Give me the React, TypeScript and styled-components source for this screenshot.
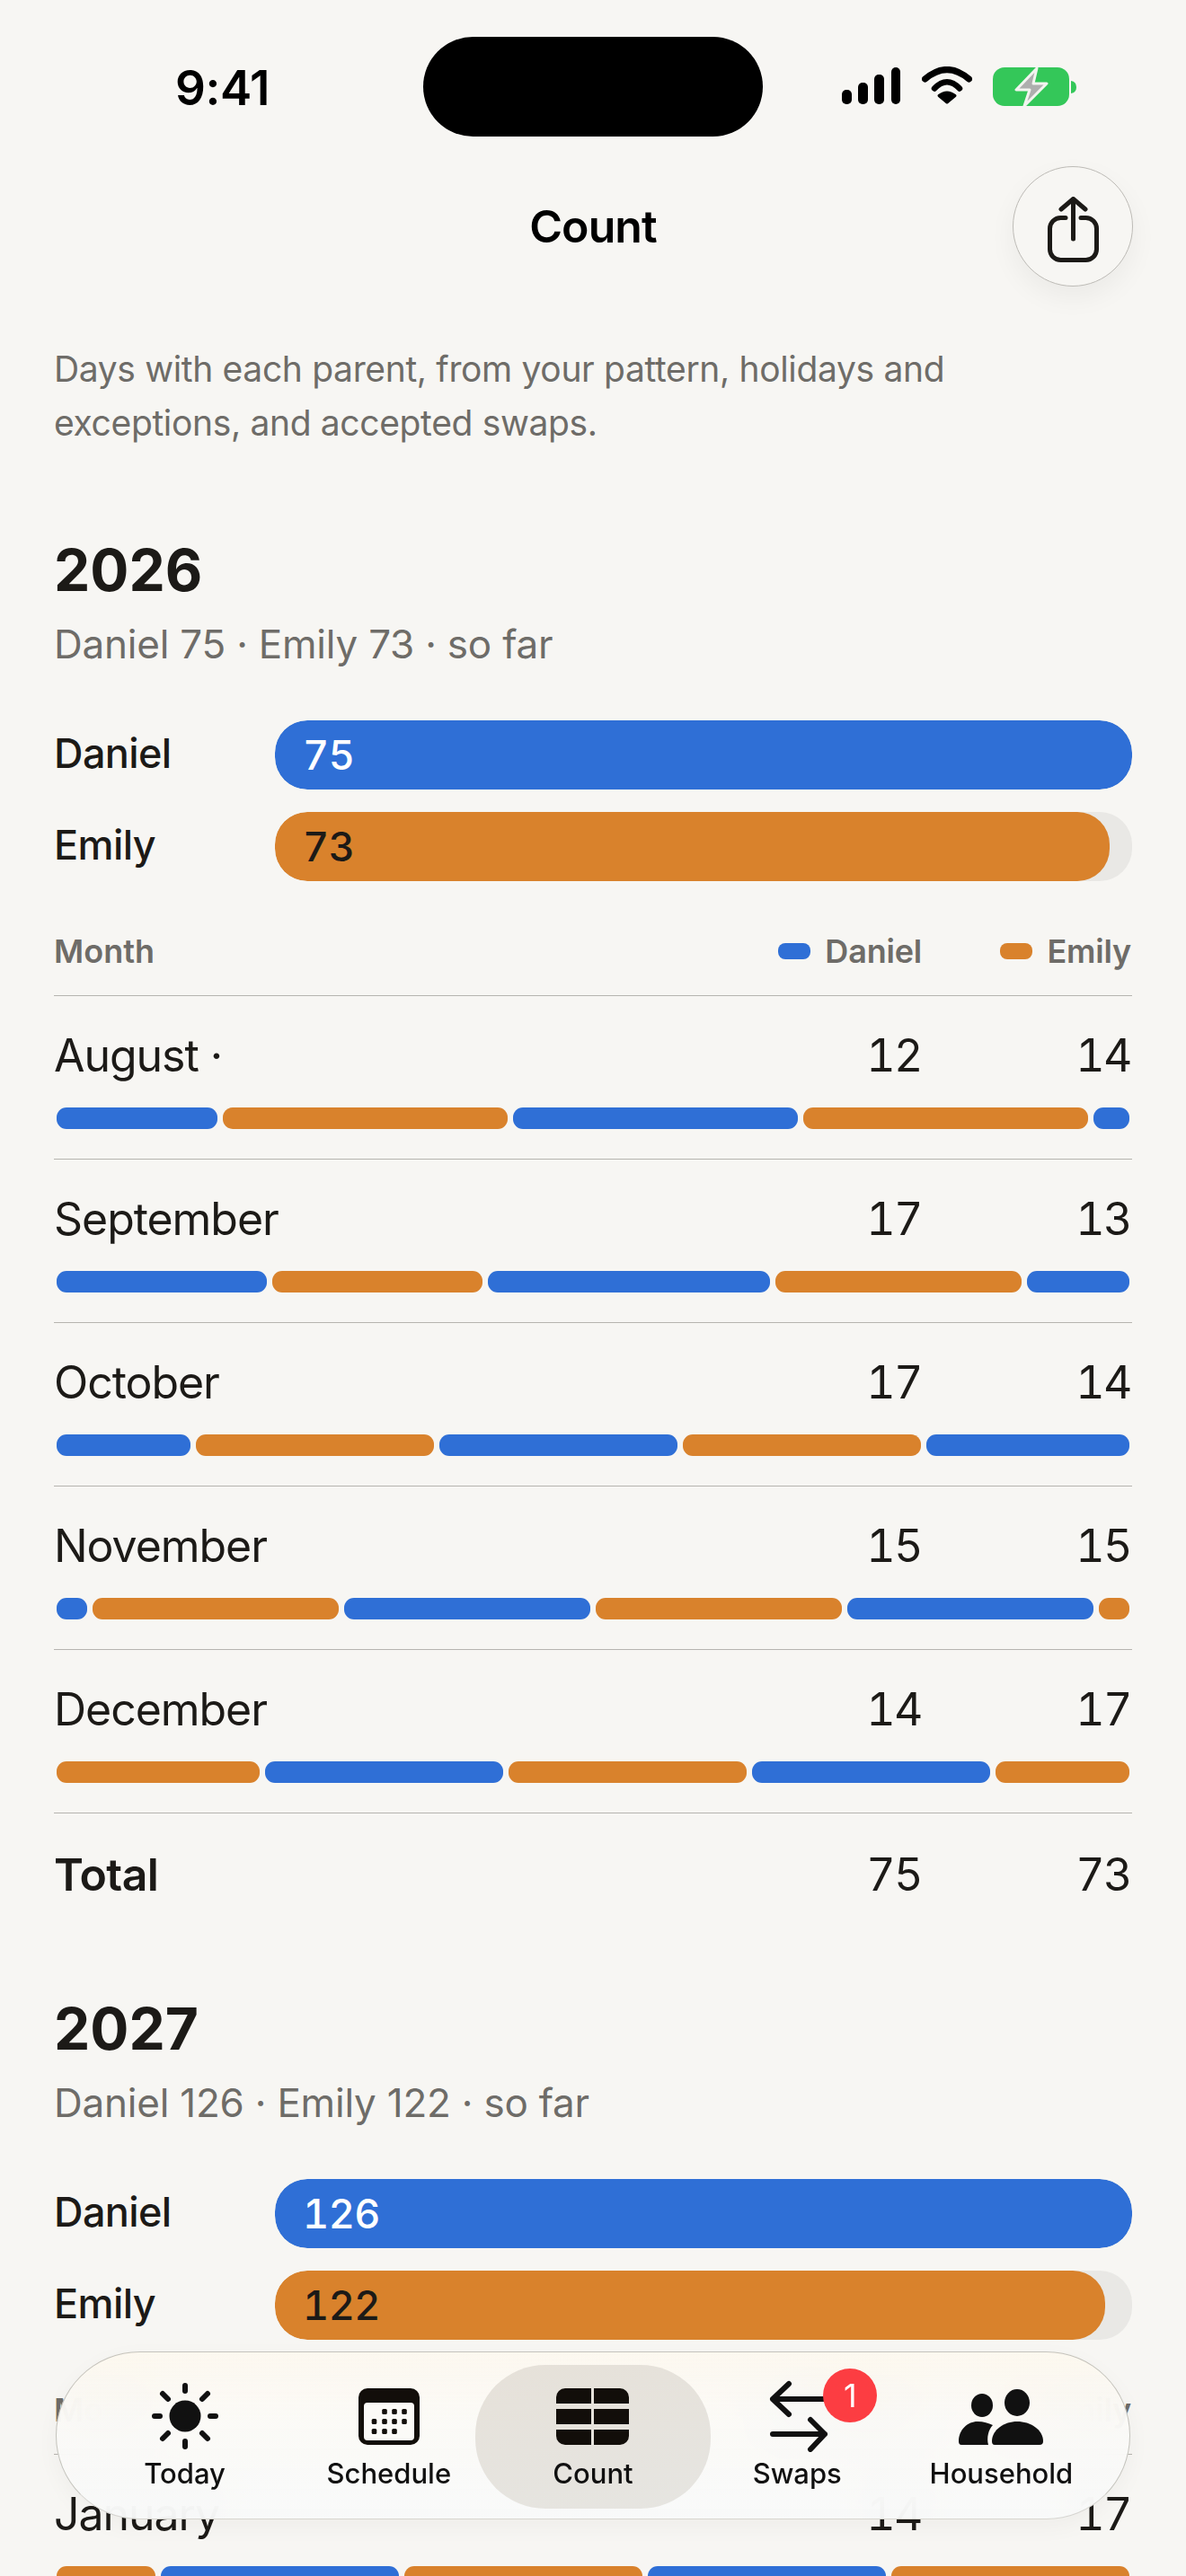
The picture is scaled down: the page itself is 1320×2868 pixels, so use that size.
import React from "react";
import styled, { createGlobalStyle } from "styled-components";

const BLUE = "#2f6fd6";
const ORANGE = "#d9822c";
const INK = "#1c1a17";
const MUTED = "#6e6c68";

const Global = createGlobalStyle`
  html, body { margin: 0; padding: 0; background: #f7f6f3; }
  * { box-sizing: border-box; }
  body { font-family: Inter, "Liberation Sans", sans-serif; color: ${INK}; }
`;

const Screen = styled.div`
  position: relative;
  width: 1320px;
  height: 2868px;
  overflow: hidden;
  background: #f7f6f3;
`;

const StatusBar = styled.div`
  display: grid;
  grid-template-columns: 471px 378px 1fr;
  align-items: center;
  height: 111px;
  margin-top: 41px;
`;
const Clock = styled.div`
  text-align: center;
  padding-left: 24px;
  font-size: 53px;
  font-weight: 600;
  letter-spacing: -0.5px;
  color: #000;
  line-height: 60px;
  margin-top: 2px;
`;
const Island = styled.div`
  height: 111px;
  background: #000;
  border-radius: 56px;
`;
const StatusIcons = styled.div`
  display: flex;
  align-items: flex-start;
  padding-left: 88px;
  margin-top: 0;
  svg { display: block; flex: none; }
`;
const WifiIcon = styled.svg`margin-left: 24px; margin-top: -1px;`;
const BatteryIcon = styled.svg`margin-left: 23px;`;

const TitleBar = styled.header`
  display: grid;
  grid-template-columns: 134px 1fr 134px;
  align-items: center;
  margin: 33px 59px 0 59px;
  height: 134px;
`;
const Title = styled.h1`
  grid-column: 2;
  margin: 0;
  text-align: center;
  font-size: 50px;
  font-weight: 600;
  letter-spacing: -0.9px;
  color: #000;
  line-height: 60px;
`;
const ShareButton = styled.button`
  grid-column: 3;
  width: 134px;
  height: 134px;
  border-radius: 50%;
  padding: 9px 0 0;
  display: flex;
  align-items: center;
  justify-content: center;
  background: #f7f6f3;
  border: 1px solid #bdbbb6;
  box-shadow: 0 12px 30px rgba(0, 0, 0, 0.05);
`;

const Intro = styled.p`
  margin: 62px 60px 94px 60px;
  font-size: 39px;
  line-height: 60px;
  color: ${MUTED};
  letter-spacing: -0.35px;
`;

const Section = styled.section`
  & + & { margin-top: 102px; }
`;
const Year = styled.h2`
  margin: 0 0 14px 60px;
  font-size: 64px;
  line-height: 80px;
  font-weight: 700;
  color: ${INK};
`;
const Summary = styled.div`
  margin: 0 0 57px 60px;
  font-size: 44px;
  line-height: 56px;
  color: ${MUTED};
  letter-spacing: -0.22px;
`;

const Totals = styled.div`
  display: flex;
  flex-direction: column;
  gap: 25px;
  margin: 0 60px 56px;
`;
const TotalRow = styled.div`
  display: grid;
  grid-template-columns: 246px 1fr;
  align-items: center;
`;
const ParentName = styled.div`
  font-size: 45px;
  font-weight: 500;
  letter-spacing: -0.6px;
  line-height: 56px;
  padding-bottom: 3px;
`;
const Track = styled.div`
  height: 77px;
  border-radius: 36px;
  background: #e9e8e5;
  overflow: hidden;
`;
const Fill = styled.div<{ $who: "d" | "e" }>`
  height: 100%;
  border-radius: 36px;
  padding-left: 31px;
  display: flex;
  align-items: center;
  font-size: 45px;
  font-weight: 500;
  letter-spacing: -0.5px;
  font-variant-numeric: tabular-nums;
  background: ${(p) => (p.$who === "d" ? BLUE : ORANGE)};
  color: ${(p) => (p.$who === "d" ? "#fff" : INK)};
`;

const Table = styled.div`
  margin: 0 60px;
`;
const columns = `grid-template-columns: 1fr 140px 233px;`;
const HeaderRow = styled.div`
  display: grid;
  ${columns}
  padding: 0 1px 27px 0;
  border-bottom: 1px solid #b6b4af;
  font-size: 36px;
  line-height: 44px;
  font-weight: 600;
  color: ${MUTED};
`;
const LegendCell = styled.div`
  display: flex;
  align-items: center;
  justify-content: flex-end;
  white-space: nowrap;
`;
const LegendDot = styled.span<{ $who: "d" | "e" }>`
  flex: none;
  width: 36px;
  height: 18px;
  border-radius: 8px;
  margin-right: 16px;
  background: ${(p) => (p.$who === "d" ? BLUE : ORANGE)};
`;
const LegendText = styled.span`
  letter-spacing: -0.2px;
`;

const MonthRow = styled.div`
  padding-top: 36px;
  padding-bottom: 33px;
  border-bottom: 1px solid #b6b4af;
`;
const MonthText = styled.div`
  display: grid;
  ${columns}
  padding: 0 1px 0 0;
  font-size: 50px;
  line-height: 60px;
  letter-spacing: -1.05px;
`;
const Num = styled.div`
  text-align: right;
  letter-spacing: -1.5px;
  font-size: 50px;
  font-variant-numeric: tabular-nums;
`;
const Segments = styled.div`
  display: flex;
  gap: 6px;
  height: 24px;
  margin: 28px 3px 0;
`;
const Segment = styled.div<{ $who: "d" | "e" }>`
  height: 24px;
  border-radius: 11px;
  background: ${(p) => (p.$who === "d" ? BLUE : ORANGE)};
`;
const TotalLine = styled(MonthText)`
  padding-top: 38px;
`;
const TotalLabel = styled.div`
  font-weight: 600;
  letter-spacing: -0.6px;
`;

const TabBar = styled.nav`
  position: absolute;
  left: 62px;
  top: 2618px;
  width: 1196px;
  height: 187px;
  padding: 31px 29px 0;
  display: flex;
  border-radius: 94px;
  border: 1px solid rgba(178, 176, 168, 0.75);
  border-bottom-color: rgba(200, 198, 192, 0.7);
  background: linear-gradient(180deg, rgba(253, 248, 238, 0.86) 0%, rgba(251, 250, 247, 0.92) 40%, rgba(248, 249, 249, 0.94) 100%);
  backdrop-filter: blur(28px);
  box-shadow: 0 8px 26px rgba(0, 0, 0, 0.04);
`;
const Tab = styled.div<{ $active?: boolean }>`
  position: relative;
  flex: 1 1 0;
  display: flex;
  flex-direction: column;
  align-items: center;
  &::before {
    content: "";
    display: ${(p) => (p.$active ? "block" : "none")};
    position: absolute;
    left: -17px;
    right: -17px;
    top: -17px;
    height: 160px;
    border-radius: 78px;
    background: linear-gradient(170deg, #e6e1d9 0%, #e6e5e1 100%);
  }
`;
const TabIcon = styled.div`
  position: relative;
  width: 100px;
  height: 80px;
  svg { display: block; }
`;
const TabLabel = styled.div`
  position: relative;
  margin-top: 5px;
  font-size: 31px;
  line-height: 38px;
  font-weight: 500;
  color: #111;
  white-space: nowrap;
`;
const Badge = styled.span`
  position: absolute;
  left: 79px;
  top: -13px;
  width: 60px;
  height: 60px;
  border-radius: 50%;
  background: #fc3d42;
  color: #fff;
  font-size: 36px;
  display: flex;
  align-items: center;
  justify-content: center;
`;

type Who = "d" | "e";
type Month = { name: string; d: number; e: number; segs: [Who, number][] };
type YearData = { year: string; d: number; e: number; max: number; months: Month[]; total?: boolean };

const years: YearData[] = [
  {
    year: "2026",
    d: 75,
    e: 73,
    max: 75,
    total: true,
    months: [
      { name: "August ·", d: 12, e: 14, segs: [["d", 4], ["e", 7], ["d", 7], ["e", 7], ["d", 1]] },
      { name: "September", d: 17, e: 13, segs: [["d", 6], ["e", 6], ["d", 8], ["e", 7], ["d", 3]] },
      { name: "October", d: 17, e: 14, segs: [["d", 4], ["e", 7], ["d", 7], ["e", 7], ["d", 6]] },
      { name: "November", d: 15, e: 15, segs: [["d", 1], ["e", 7], ["d", 7], ["e", 7], ["d", 7], ["e", 1]] },
      { name: "December", d: 14, e: 17, segs: [["e", 6], ["d", 7], ["e", 7], ["d", 7], ["e", 4]] },
    ],
  },
  {
    year: "2027",
    d: 126,
    e: 122,
    max: 126,
    months: [{ name: "January", d: 14, e: 17, segs: [["e", 3], ["d", 7], ["e", 7], ["d", 7], ["e", 7]] }],
  },
];

const SignalGlyph = () => (
  <svg width="65" height="41" viewBox="0 0 65 41" fill="#000">
    <rect x="0" y="25" width="11" height="16" rx="5" />
    <rect x="18" y="17" width="11" height="24" rx="5" />
    <rect x="36" y="8" width="11" height="33" rx="5" />
    <rect x="55" y="0" width="10" height="41" rx="5" />
  </svg>
);
const WifiGlyph = () => (
  <WifiIcon width="56" height="42" viewBox="0 0 56 42" fill="none" stroke="#000" strokeLinecap="round">
    <path d="M3.5 14 Q28 -7 52.5 14" strokeWidth="7" />
    <path d="M14 24.5 Q28 10 42 24.5" strokeWidth="6.5" />
    <path d="M28 40 L19 32.5 Q28 25.5 37 32.5 Z" fill="#000" stroke="#000" strokeWidth="3" strokeLinejoin="round" />
  </WifiIcon>
);
const BatteryGlyph = () => (
  <BatteryIcon width="93" height="43" viewBox="0 0 93 43">
    <rect x="0" y="0" width="85" height="43" rx="13" fill="#34c759" />
    <path d="M87 15 Q93 16 93 22 Q93 28 87 29 Z" fill="#34c759" />
    <path d="M49 1 L26 25 L41 25 L35 43 L60 18 L45 18 Z" fill="#aeaeae" stroke="#f2f4ef" strokeWidth="3" strokeLinejoin="round" />
  </BatteryIcon>
);
const ShareGlyph = () => (
  <svg width="57" height="76" viewBox="0 0 57 76" fill="none" stroke={INK} strokeWidth="5" strokeLinecap="round" strokeLinejoin="round">
    <path d="M20 23.5 H14.5 a12 12 0 0 0 -12 12 V58.5 a12 12 0 0 0 12 12 H42.5 a12 12 0 0 0 12 -12 V35.5 a12 12 0 0 0 -12 -12 H37" />
    <path d="M28.5 47 V3" />
    <path d="M15 14 L28.5 2.5 L42 14" />
  </svg>
);

const SunGlyph = () => (
  <svg width="100" height="80" viewBox="-50 -40 100 80" fill="#111" stroke="#111" strokeWidth="6" strokeLinecap="round">
    <circle r="17.5" stroke="none" />
    <path d="M0 -28 V-34 M0 28 V34 M-28 0 H-34 M28 0 H34 M-19 -19 L-25 -25 M19 -19 L25 -25 M-19 19 L-25 25 M19 19 L25 25" fill="none" />
  </svg>
);
const CalendarGlyph = () => {
  const dots: [number, number][] = [
    [-5, -5], [6, -5], [17, -5],
    [-16.5, 6], [-5, 6], [6, 6], [17, 6],
    [-16.5, 17], [-5, 17], [6, 17],
  ];
  return (
    <svg width="100" height="80" viewBox="-50 -40 100 80">
      <rect x="-34" y="-31" width="68" height="63" rx="10" fill="#120e0a" />
      <rect x="-28" y="-15" width="56" height="42" rx="4" fill="#fbfaf7" />
      {dots.map(([x, y]) => (
        <rect key={`${x}${y}`} x={x - 2.8} y={y - 3} width="5.6" height="6" rx="1.6" fill="#120e0a" />
      ))}
    </svg>
  );
};
const TableGlyph = () => (
  <svg width="100" height="80" viewBox="-50 -40 100 80" fill="#120e0a">
    <clipPath id="table-clip">
      <rect x="-41" y="-31" width="81" height="63" rx="10" />
    </clipPath>
    <g clipPath="url(#table-clip)">
      <rect x="-41" y="-31" width="39" height="17" />
      <rect x="1" y="-31" width="39" height="17" />
      <rect x="-41" y="-8" width="39" height="17" />
      <rect x="1" y="-8" width="39" height="17" />
      <rect x="-41" y="15" width="39" height="17" />
      <rect x="1" y="15" width="39" height="17" />
    </g>
  </svg>
);
const SwapGlyph = () => (
  <svg width="100" height="80" viewBox="-50 -40 100 80" fill="none" stroke="#111" strokeWidth="6" strokeLinecap="round" strokeLinejoin="round">
    <path d="M31 -19 H-27 M-9 -36 L-27 -19 L-9 -2" />
    <path d="M-27 20 H31 M15 4 L31 20 L15 37" />
  </svg>
);
const PeopleGlyph = () => (
  <svg width="100" height="80" viewBox="-50 -40 100 80" fill="#111">
    <ellipse cx="-21" cy="-12" rx="12" ry="13" />
    <ellipse cx="18" cy="-15" rx="14" ry="15" />
    <path d="M-44 32 Q-47 32 -47 28 C-47 15 -37 6 -26 6 C-19 6 -14 8 -9 10 C-14 15 -16 24 -14 32 Z" />
    <path d="M-7 32 Q-10 32 -10 28 C-10 15 4 6 18 6 C33 6 47 15 47 28 Q47 32 43 32 Z" />
  </svg>
);

const Bars = ({ segs }: { segs: [Who, number][] }) => {
  const total = segs.reduce((a, s) => a + s[1], 0);
  return (
    <Segments>
      {segs.map(([who, days], i) => (
        <Segment key={i} $who={who} style={{ width: `calc(${days} / ${total} * (100% + 6px) - 6px)` }} />
      ))}
    </Segments>
  );
};

const tabs = [
  { label: "Today", icon: <SunGlyph /> },
  { label: "Schedule", icon: <CalendarGlyph /> },
  { label: "Count", icon: <TableGlyph />, active: true },
  { label: "Swaps", icon: <SwapGlyph />, badge: "1" },
  { label: "Household", icon: <PeopleGlyph /> },
];

export default function App() {
  return (
    <Screen>
      <Global />
      <StatusBar>
        <Clock>9:41</Clock>
        <Island />
        <StatusIcons>
          <SignalGlyph />
          <WifiGlyph />
          <BatteryGlyph />
        </StatusIcons>
      </StatusBar>
      <TitleBar>
        <Title>Count</Title>
        <ShareButton aria-label="Share">
          <ShareGlyph />
        </ShareButton>
      </TitleBar>
      <Intro>
        Days with each parent, from your pattern, holidays and
        <br />
        exceptions, and accepted swaps.
      </Intro>
      {years.map((y) => (
        <Section key={y.year}>
          <Year>{y.year}</Year>
          <Summary>
            Daniel {y.d} · Emily {y.e} · so far
          </Summary>
          <Totals>
            <TotalRow>
              <ParentName>Daniel</ParentName>
              <Track>
                <Fill $who="d" style={{ width: `${(y.d / y.max) * 100}%` }}>{y.d}</Fill>
              </Track>
            </TotalRow>
            <TotalRow>
              <ParentName>Emily</ParentName>
              <Track>
                <Fill $who="e" style={{ width: `${(y.e / y.max) * 100}%` }}>{y.e}</Fill>
              </Track>
            </TotalRow>
          </Totals>
          <Table>
            <HeaderRow>
              <div>Month</div>
              <LegendCell>
                <LegendDot $who="d" />
                <LegendText>Daniel</LegendText>
              </LegendCell>
              <LegendCell>
                <LegendDot $who="e" />
                <LegendText>Emily</LegendText>
              </LegendCell>
            </HeaderRow>
            {y.months.map((m) => (
              <MonthRow key={m.name}>
                <MonthText>
                  <div>{m.name}</div>
                  <Num>{m.d}</Num>
                  <Num>{m.e}</Num>
                </MonthText>
                <Bars segs={m.segs} />
              </MonthRow>
            ))}
            {y.total && (
              <TotalLine>
                <TotalLabel>Total</TotalLabel>
                <Num>{y.d}</Num>
                <Num>{y.e}</Num>
              </TotalLine>
            )}
          </Table>
        </Section>
      ))}
      <TabBar>
        {tabs.map((t) => (
          <Tab key={t.label} $active={t.active}>
            <TabIcon>
              {t.icon}
              {t.badge && <Badge>{t.badge}</Badge>}
            </TabIcon>
            <TabLabel>{t.label}</TabLabel>
          </Tab>
        ))}
      </TabBar>
    </Screen>
  );
}
